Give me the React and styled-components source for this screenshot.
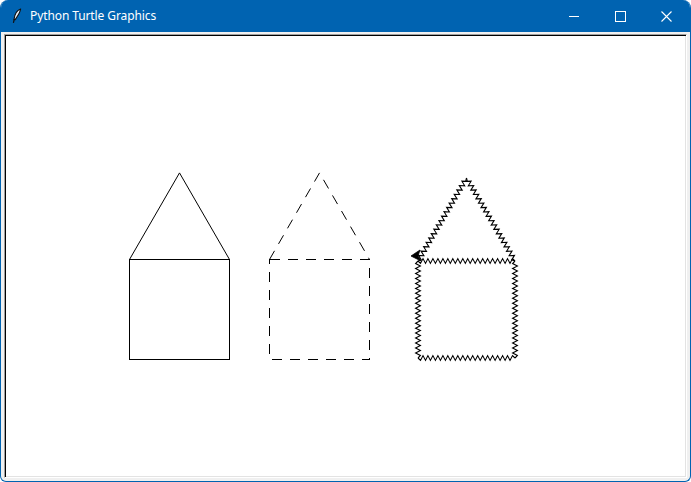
import styled, { createGlobalStyle } from "styled-components";

const GlobalStyle = createGlobalStyle`
    html, body {
        margin: 0;
        padding: 0;
        background: #ffffff;
        overflow: hidden;
    }
`;

// canvas content origin in page coords (window edge + padding + border)
const OX = 6;
const OY = 36;

const Window = styled.div`
    width: 691px;
    height: 482px;
    box-sizing: border-box;
    display: flex;
    flex-direction: column;
    border: 1px solid #0063b1;
    border-top: none;
    border-radius: 8px 8px 6px 6px;
    overflow: hidden;
    background: #f0f0f0;
    font-family: "Noto Sans", "Open Sans", sans-serif;
`;

const TitleBar = styled.div`
    height: 32px;
    flex: none;
    display: flex;
    align-items: center;
    background: #0063b1;
    color: #ffffff;
    margin: 0 -1px;
`;

const AppIcon = styled.div`
    width: 16px;
    height: 16px;
    margin-left: 9px;
    margin-right: 5px;
    display: flex;
    align-items: center;
    justify-content: center;
`;

const Title = styled.div`
    flex: 1;
    font-size: 12px;
    letter-spacing: -0.1px;
    padding-bottom: 1px;
`;

const Controls = styled.div`
    display: flex;
    height: 100%;
    margin-right: 2px;
`;

const ControlButton = styled.div`
    width: 46px;
    height: 100%;
    display: flex;
    align-items: center;
    justify-content: center;
`;

const Body = styled.div`
    flex: 1;
    display: flex;
    padding: 2px 3px 3px 3px;
    min-height: 0;
`;

const Canvas = styled.div`
    flex: 1;
    position: relative;
    background: #ffffff;
    border-style: solid;
    border-width: 1px;
    border-color: #a0a0a0 #ffffff #ffffff #a0a0a0;
    box-shadow: inset 1px 1px 0 #000000, inset -1px -1px 0 #e3e3e3;
    padding: 1px;
    overflow: hidden;

    svg {
        display: block;
        width: 100%;
        height: 100%;
    }
`;

const Feather = () => (
    <svg width="10" height="16" viewBox="0 0 10 16">
        <path d="M8.6 1 C5.2 2.2 2.6 6.5 2 11.5 L3.2 11.6 C5.2 8.4 8 5.2 8.6 1 Z" fill="#e8eef6" stroke="#111" strokeWidth="1.2" strokeLinejoin="round" />
        <path d="M2.2 11.5 L1.4 14.8" stroke="#111" strokeWidth="1.2" />
    </svg>
);

const Minimize = () => (
    <svg width="11" height="11" viewBox="0 0 11 11">
        <path d="M0 5.5 H10" stroke="#fff" strokeWidth="1" shapeRendering="crispEdges" />
    </svg>
);

const Maximize = () => (
    <svg width="11" height="11" viewBox="0 0 11 11">
        <rect x="0.5" y="0.5" width="10" height="10" fill="none" stroke="#fff" strokeWidth="1" shapeRendering="crispEdges" />
    </svg>
);

const Close = () => (
    <svg width="11" height="11" viewBox="0 0 11 11">
        <path d="M0.5 0.5 L10.5 10.5 M10.5 0.5 L0.5 10.5" stroke="#fff" strokeWidth="1.1" />
    </svg>
);

// zigzag line between two points, like the turtle's jagged pen
const zigzag = (x1, y1, x2, y2, step = 2.5, amp = 2.4) => {
    const dx = x2 - x1;
    const dy = y2 - y1;
    const len = Math.hypot(dx, dy);
    const ux = dx / len;
    const uy = dy / len;
    const px = -uy;
    const py = ux;
    const n = Math.round(len / step);
    const pts = [];
    for (let i = 0; i <= n; i++) {
        const t = (i / n) * len;
        const o = i === 0 || i === n ? 0 : (i % 2 ? amp : -amp);
        pts.push(`${(x1 + ux * t + px * o).toFixed(1)},${(y1 + uy * t + py * o).toFixed(1)}`);
    }
    return pts.join(" ");
};

const House = ({ x, y, size = 100, dash }) => {
    const h = size * Math.sqrt(3) / 2;
    return (
        <g fill="none" stroke="#000" strokeWidth="1" strokeDasharray={dash}>
            <path d={`M${x} ${y} H${x + size} V${y + size} H${x} Z`} shapeRendering="crispEdges" />
            <path d={`M${x} ${y} L${x + size / 2} ${y - h} L${x + size} ${y}`} />
        </g>
    );
};

const ZigHouse = ({ x, y, size = 97 }) => {
    const ax = x + size / 2;
    const ay = 178;
    const segs = [
        [x, y, ax, ay],
        [ax, ay, x + size, y],
        [x + size, y, x + size, y + size],
        [x + size, y + size, x, y + size],
        [x, y + size, x, y],
        [x, y, x + size, y],
    ];
    return (
        <g fill="none" stroke="#000" strokeWidth="1.1">
            {segs.map((s, i) => (
                <polyline key={i} points={zigzag(...s)} />
            ))}
        </g>
    );
};

const TurtleCursor = ({ x, y }) => (
    <polygon
        points={`${x},${y} ${x + 9},${y - 6} ${x + 7},${y} ${x + 10},${y + 5}`}
        fill="#000"
        stroke="#000"
        strokeWidth="0.8"
        strokeLinejoin="round"
    />
);

const App = () => (
    <>
        <GlobalStyle />
        <Window>
            <TitleBar>
                <AppIcon><Feather /></AppIcon>
                <Title>Python Turtle Graphics</Title>
                <Controls>
                    <ControlButton><Minimize /></ControlButton>
                    <ControlButton><Maximize /></ControlButton>
                    <ControlButton><Close /></ControlButton>
                </Controls>
            </TitleBar>
            <Body>
                <Canvas>
                    <svg>
                        <g transform={`translate(${-OX} ${-OY})`}>
                            <House x={129.5} y={259.5} />
                            <House x={269.5} y={259.5} dash="10 8" />
                            <ZigHouse x={418} y={261} />
                            <TurtleCursor x={411} y={256} />
                        </g>
                    </svg>
                </Canvas>
            </Body>
        </Window>
    </>
);

export default App;
